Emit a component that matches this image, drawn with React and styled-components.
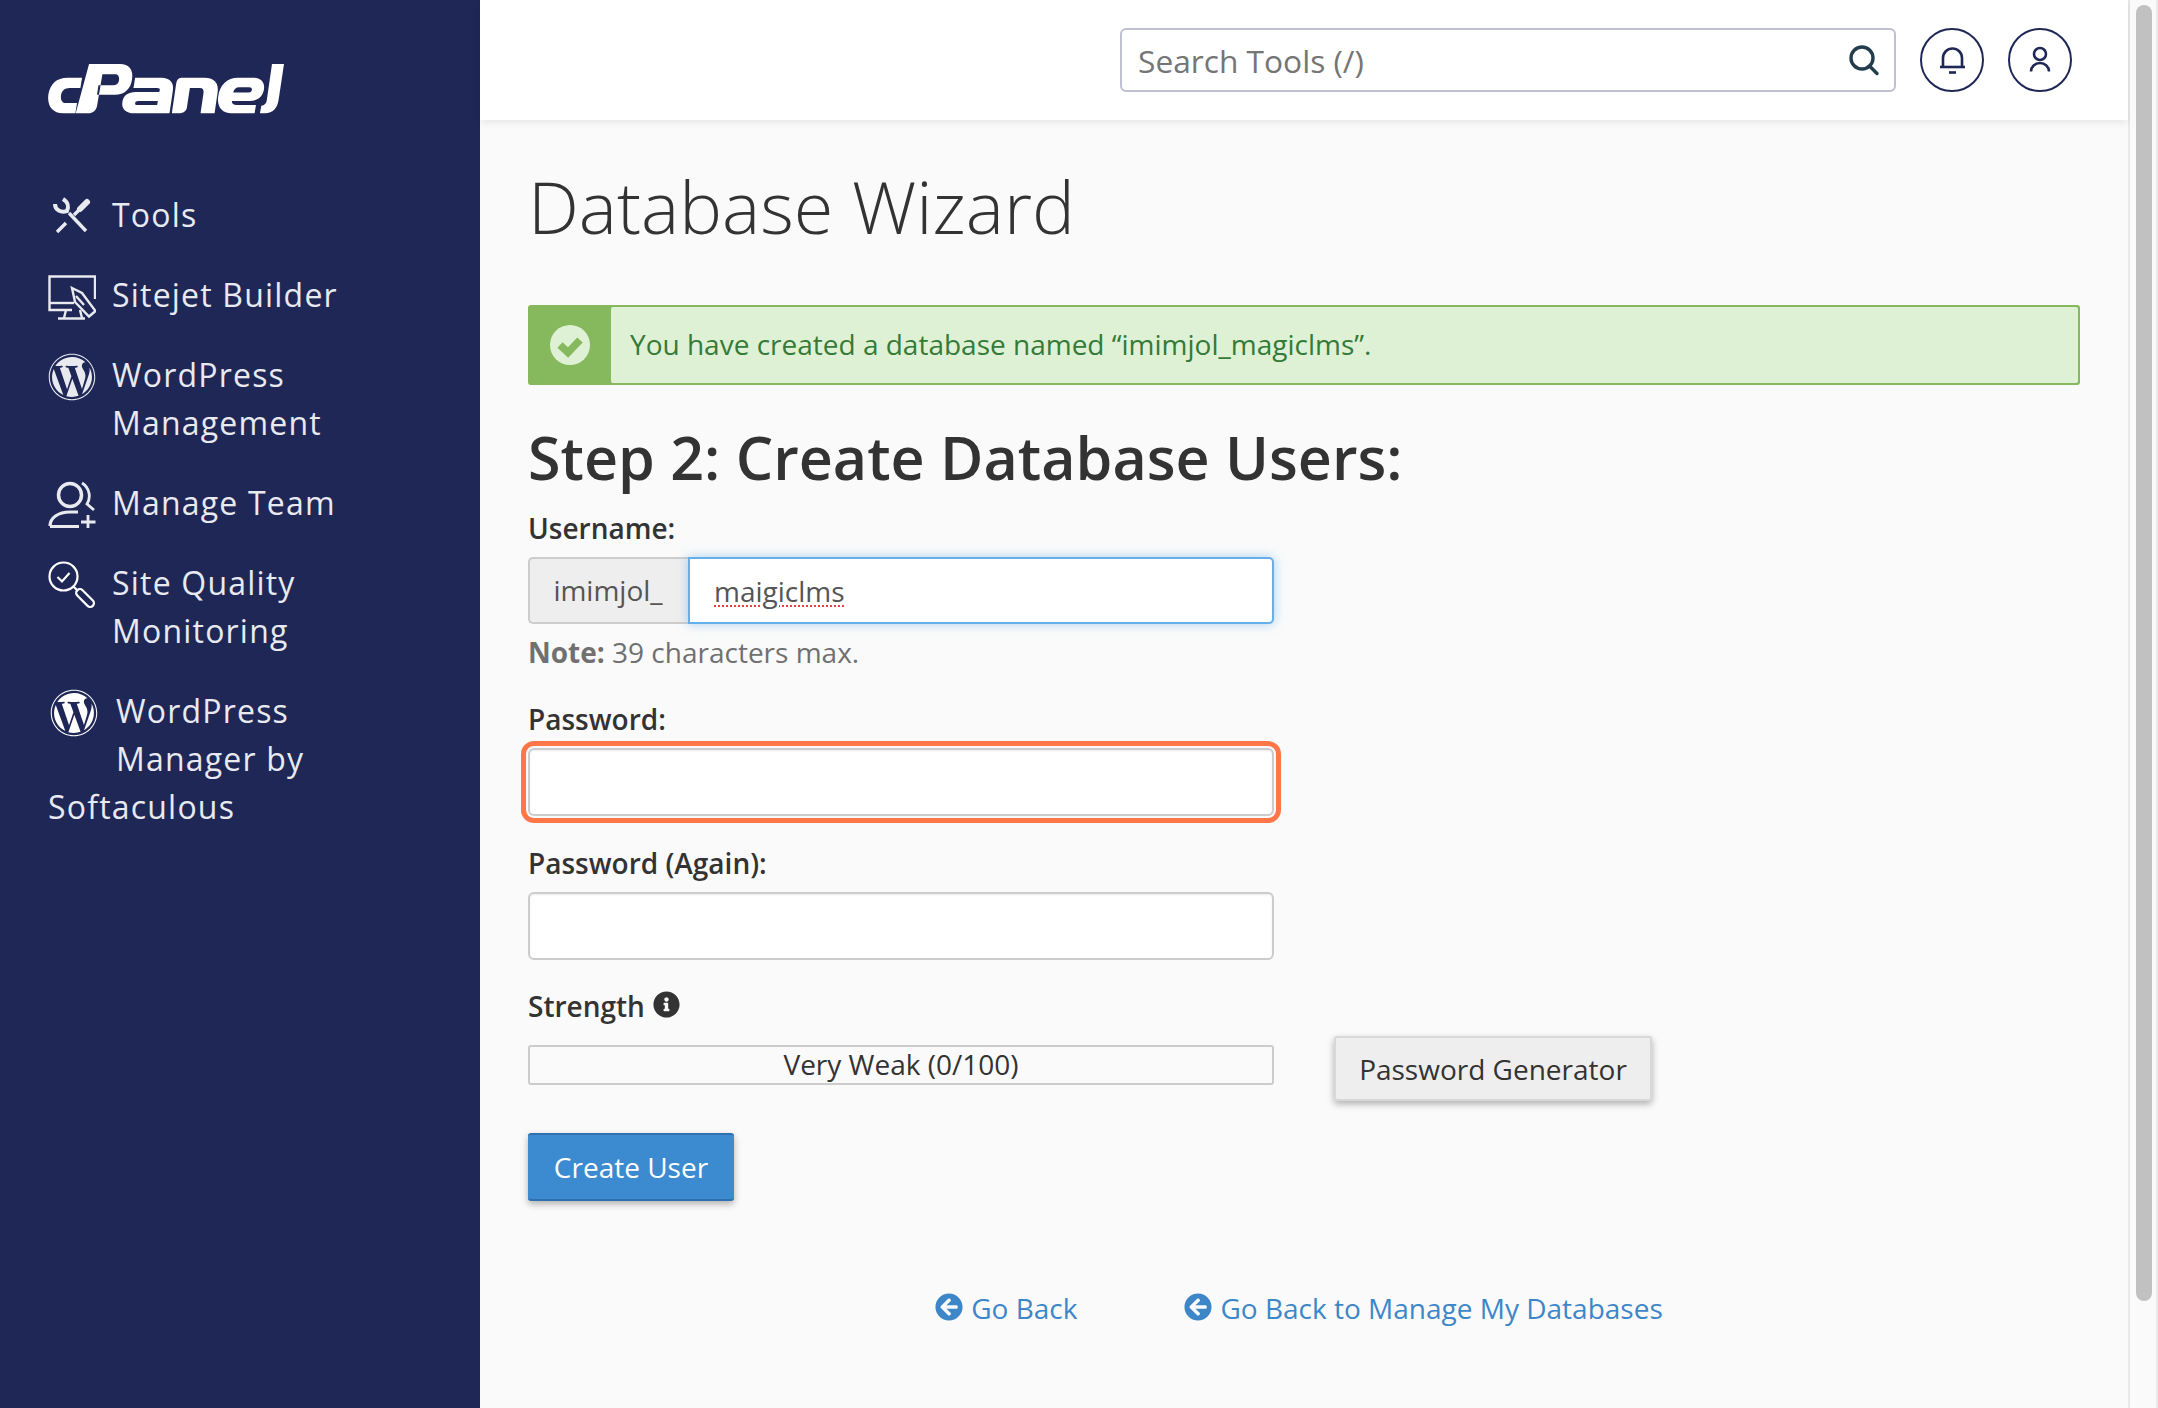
import React from 'react'
import styled, { createGlobalStyle } from 'styled-components'
import { FaWordpress, FaInfoCircle, FaArrowCircleLeft } from 'react-icons/fa'

const GlobalStyle = createGlobalStyle`
  html, body {
    margin: 0;
    padding: 0;
    height: 100%;
    overflow: hidden;
    background: #fafafa;
    font-family: "Open Sans", "Liberation Sans", sans-serif;
  }
  * { box-sizing: border-box; }
`

const Page = styled.div`
  display: grid;
  grid-template-columns: 480px 1fr 28px;
  height: 100vh;
  overflow: hidden;
`

const Sidebar = styled.aside`
  background: #1f2756;
  padding: 64px 0 0 48px;
  color: #e8eaf0;
`

const Logo = styled.svg`
  display: block;
  width: 237px;
  height: 50px;
`

const Nav = styled.nav`
  display: flex;
  flex-direction: column;
  gap: 32px;
  margin-top: 77px;
  padding-right: 48px;
`

const NavItem = styled.a`
  display: flex;
  gap: 16px;
  font-size: 32px;
  line-height: 48px;
  letter-spacing: 1.2px;
  color: #e8eaf0;
`

const NavFloat = styled.a`
  display: block;
  font-size: 32px;
  line-height: 48px;
  letter-spacing: 1.2px;
  color: #e8eaf0;
`

const NavIcon = styled.svg`
  flex: none;
  width: 48px;
  height: 48px;
  margin-top: ${(props) => props.$top || 0}px;
  margin-bottom: -${(props) => props.$top || 0}px;
`

const FloatIcon = styled.span`
  float: left;
  width: 68px;
  height: 96px;
  padding: 2px 0 0 2px;
  font-size: 48px;
  line-height: 0;
  color: #fff;
`

const WpIcon = styled.span`
  flex: none;
  width: 48px;
  height: 48px;
  margin-top: 2px;
  margin-bottom: -2px;
  font-size: 48px;
  line-height: 0;
`

const Main = styled.main`
  min-width: 0;
  height: 100vh;
  background: #fafafa;
  border-right: 2px solid #e9e9e9;
`

const Topbar = styled.header`
  display: flex;
  align-items: center;
  justify-content: flex-end;
  gap: 24px;
  height: 120px;
  padding: 0 56px 0 0;
  background: #fff;
  box-shadow: 0 2px 8px rgba(0, 0, 0, 0.09);
`

const Search = styled.div`
  display: flex;
  align-items: center;
  width: 776px;
  height: 64px;
  padding: 0 14px 0 16px;
  background: #fff;
  border: 2px solid #bfc1d2;
  border-radius: 6px;
`

const SearchInput = styled.input`
  flex: 1;
  border: none;
  outline: none;
  padding: 0;
  font-family: inherit;
  font-size: 31.7px;
  background: transparent;
  &::placeholder { color: #757575; opacity: 1; }
`

const RoundButton = styled.button`
  display: block;
  width: 64px;
  height: 64px;
  padding: 0;
  background: #fff;
  border: 2px solid #1f2756;
  border-radius: 50%;
  svg { display: block; margin: -2px; }
`

const Content = styled.div`
  padding: 0 48px 0 48px;
`

const Title = styled.h1`
  margin: 0;
  padding-top: 30px;
  font-size: 72px;
  line-height: 112px;
  font-weight: 300;
  color: #333;
`

const Alert = styled.div`
  display: flex;
  align-items: stretch;
  height: 80px;
  margin-top: 43px;
  background: #86b85d;
  border: 2px solid #86b85d;
  border-radius: 3px;
`

const AlertIcon = styled.div`
  display: flex;
  align-items: center;
  justify-content: center;
  width: 81px;
  padding-right: 2px;
  flex: none;
`

const AlertText = styled.div`
  flex: 1;
  display: flex;
  align-items: center;
  padding: 0 0 2px 19px;
  background: #dff1d4;
  border-radius: 2px;
  font-size: 28px;
  color: #357a38;
`

const Step = styled.h2`
  margin: 36px 0 0;
  font-size: 59.2px;
  line-height: 72px;
  font-weight: 600;
  color: #333;
`

const Label = styled.label`
  display: block;
  font-size: 28px;
  line-height: 38px;
  font-weight: 600;
  color: #333;
  margin-top: ${(props) => props.$top || 0}px;
`

const InputRow = styled.div`
  display: flex;
  width: 746px;
  height: 67px;
  margin-top: 10px;
`

const Addon = styled.span`
  display: flex;
  align-items: center;
  justify-content: center;
  width: 160px;
  padding: 0 2px 2px 0;
  background: #eee;
  border: 2px solid #ccc;
  border-right: none;
  border-radius: 5px 0 0 5px;
  font-size: 28px;
  color: #555;
`

const UserInput = styled.input`
  flex: 1;
  min-width: 0;
  padding: 0 24px;
  background: #fff;
  border: 2px solid #66afe9;
  border-radius: 0 5px 5px 0;
  outline: none;
  box-shadow: 0 0 11px rgba(102, 175, 233, 0.55);
  font-family: inherit;
  font-size: 28px;
  color: #555;
  text-decoration: underline dotted #e8403f 2px;
  text-underline-offset: 4px;
`

const Note = styled.p`
  margin: 9px 0 0;
  font-size: 28px;
  line-height: 38px;
  color: #707070;
  b { font-weight: 700; }
`

const TextInput = styled.input`
  display: block;
  width: 746px;
  height: 68px;
  margin-top: 10px;
  background: #fff;
  border: 2px solid #ccc;
  border-radius: 6px;
  box-shadow: inset 0 1px 2px rgba(0, 0, 0, 0.08);
  outline: ${(props) => (props.$alert ? '5px solid #ff7648' : 'none')};
  outline-offset: 2.5px;
`

const StrengthRow = styled.div`
  display: flex;
  align-items: flex-start;
  margin-top: 27px;
`

const StrengthCol = styled.div`
  width: 746px;
  flex: none;
`

const StrengthLabel = styled.div`
  display: flex;
  align-items: center;
  gap: 8px;
  height: 38px;
  font-size: 28px;
  font-weight: 600;
  color: #333;
  svg { font-size: 27px; margin-top: -3px; }
`

const Bar = styled.div`
  height: 40px;
  margin-top: 20px;
  background: #fafafa;
  border: 2px solid #ccc;
  border-radius: 3px;
  text-align: center;
  font-size: 28px;
  line-height: 34px;
  color: #333;
`

const GeneratorButton = styled.button`
  flex: none;
  width: 318px;
  height: 65px;
  margin: 49px 0 0 60px;
  background: #eee;
  border: 2px solid #d8d8d8;
  border-radius: 3px;
  box-shadow: 0 3px 7px rgba(0, 0, 0, 0.3);
  font-family: inherit;
  font-size: 28px;
  color: #333;
`

const CreateButton = styled.button`
  display: block;
  width: 206px;
  height: 68px;
  margin-top: 32px;
  background: #3c8ad0;
  border: none;
  border-top: 2px solid #2f71b0;
  border-bottom: 2px solid #2f71b0;
  border-radius: 3px;
  box-shadow: 0 3px 7px rgba(0, 0, 0, 0.3);
  font-family: inherit;
  font-size: 28px;
  color: #fff;
`

const Links = styled.div`
  display: flex;
  justify-content: center;
  gap: 107px;
  margin-top: 88px;
  padding-right: 10px;
`

const BackLink = styled.a`
  display: flex;
  align-items: center;
  gap: 8px;
  font-size: 28px;
  line-height: 38px;
  color: #3d87c9;
  svg { font-size: 28px; margin-top: -3px; }
`

const Scrollbar = styled.div`
  height: 100vh;
  padding: 5px 4px 0 6px;
  background: #fafafa;
  border-right: 2px solid #e9e9e9;
`

const Thumb = styled.div`
  height: 1296px;
  background: #c1c1c1;
  border-radius: 8px;
`

const iconStroke = { fill: 'none', stroke: '#e8eaf0', strokeWidth: 2.4 }

function CpanelLogo() {
  return (
    <Logo viewBox="25 28 710 146" preserveAspectRatio="none" fill="#fff">
      <path d="M127 68H84C50 68 31 87 26 118C22 151 38 172 70 172H107L112 142H78C68 142 62 133 64 120C66 106 75 98 90 98H122Z" />
      <path fillRule="evenodd" d="M148 28H240C268 28 281 45 277 72C273 101 255 118 225 118H172L176 90H222C232 90 237 83 238 74C239 64 234 58 226 58H188L172 150C170 163 160 172 145 172H108Z" />
      <path fillRule="evenodd" d="M286 68H365C390 68 403 82 399 106L389 172H284C258 172 244 158 248 138C251 120 265 110 288 110H358L360 104C361 100 358 98 352 98H281ZM295 136C289 136 286 139 286 143C286 146 288 148 293 148H352L354 136Z" />
      <path d="M424 68H494C523 68 538 84 533 112L524 172H482L491 112C492 103 489 98 480 98H450L441 156C439 166 430 172 418 172H396L409 85C411 74 416 68 424 68Z" />
      <path fillRule="evenodd" d="M594 68H640C664 68 675 82 672 102C668 126 652 136 628 136H576C575 143 580 148 590 148H648L644 172H574C546 172 530 152 535 122C540 88 562 68 594 68ZM598 96C588 96 582 102 580 111H626C632 111 635 108 636 103C636 99 634 96 628 96Z" />
      <path d="M696 28H732L716 132C712 158 698 172 676 172H660L664 150C676 148 680 140 681 130Z" />
    </Logo>
  )
}

function ToolsIcon() {
  return (
    <NavIcon viewBox="0 0 48 48" $top={1} fill="none" stroke="#e8eaf0">
      <path d="M7 12C7 18 13 21 19 19C21 15 20 10 15 7" strokeWidth="4" />
      <path d="M21 21L38 39" strokeWidth="3.4" />
      <path d="M39 10L32 17" strokeWidth="6" strokeLinecap="round" />
      <path d="M31 18L26 23M18 31L9 40" strokeWidth="3.4" />
    </NavIcon>
  )
}

function SitejetIcon() {
  return (
    <NavIcon viewBox="0 0 48 48" $top={4} {...iconStroke}>
      <path d="M47 24V1.5H1.5V35H24" />
      <path d="M1.5 28H26" />
      <path d="M18 35L16 43M32 35L34 43M10 43.500H37" />
      <path d="M24 13L34 18L47.500 36L41 41.500L27 27Z" />
      <path d="M28 21L36 30" />
    </NavIcon>
  )
}

function TeamIcon() {
  return (
    <NavIcon viewBox="0 0 48 48" $top={1} fill="none" stroke="#e8eaf0">
      <circle cx="22" cy="15" r="11.500" strokeWidth="3.500" />
      <path d="M34 3C42 8 43 18 39 24L46 30" strokeWidth="2.8" />
      <path d="M2 46C2 38 10 32 22 32H30M2 46.500H31" strokeWidth="3.2" />
      <path d="M40 35V48.500M33 42H47.500" strokeWidth="2.8" />
    </NavIcon>
  )
}

function QualityIcon() {
  return (
    <NavIcon viewBox="0 0 48 48" $top={2} fill="none" stroke="#fff" strokeWidth="2.2">
      <circle cx="15.500" cy="15.500" r="14" />
      <path d="M9.500 16L14 20.500L21.500 12" />
      <path d="M25.500 25.500L30 30" />
      <rect x="29" y="26.250" width="22" height="7.500" rx="3.700" transform="rotate(45 30 30)" />
    </NavIcon>
  )
}

export default function App() {
  return (
    <Page>
      <GlobalStyle />
      <Sidebar>
        <CpanelLogo />
        <Nav>
          <NavItem><ToolsIcon /><span>Tools</span></NavItem>
          <NavItem><SitejetIcon /><span>Sitejet Builder</span></NavItem>
          <NavItem><WpIcon><FaWordpress /></WpIcon><span>WordPress Management</span></NavItem>
          <NavItem><TeamIcon /><span>Manage Team</span></NavItem>
          <NavItem><QualityIcon /><span>Site Quality Monitoring</span></NavItem>
          <NavFloat><FloatIcon><FaWordpress /></FloatIcon>WordPress Manager by Softaculous</NavFloat>
        </Nav>
      </Sidebar>
      <Main>
        <Topbar>
          <Search>
            <SearchInput placeholder="Search Tools (/)" />
            <svg width="32" height="32" viewBox="0 0 32 32" fill="none" stroke="#233d4d" strokeWidth="3.4">
              <circle cx="14" cy="14" r="11" />
              <path d="M21.500 22L29 29.500" strokeLinecap="round" />
            </svg>
          </Search>
          <RoundButton aria-label="Notifications">
            <svg width="64" height="64" viewBox="0 0 64 64" fill="none" stroke="#1f2756" strokeWidth="2.6">
              <path d="M23 39V30a9.500 9.500 0 0 1 19 0V39" />
              <path d="M20 39H45" />
              <path d="M29 44.500H36" />
            </svg>
          </RoundButton>
          <RoundButton aria-label="Account">
            <svg width="64" height="64" viewBox="0 0 64 64" fill="none" stroke="#1f2756" strokeWidth="2.6">
              <circle cx="32" cy="26" r="6" />
              <path d="M23 43.500a9 8.500 0 0 1 18 0" />
            </svg>
          </RoundButton>
        </Topbar>
        <Content>
          <Title>Database Wizard</Title>
          <Alert>
            <AlertIcon>
              <svg width="40" height="40" viewBox="0 0 40 40">
                <circle cx="20" cy="20" r="20" fill="#dff1d4" />
                <path d="M10 20L18 27.500L30 15" fill="none" stroke="#86b85d" strokeWidth="7.500" />
              </svg>
            </AlertIcon>
            <AlertText>You have created a database named “imimjol_magiclms”.</AlertText>
          </Alert>
          <Step>Step 2: Create Database Users:</Step>
          <Label $top={16}>Username:</Label>
          <InputRow>
            <Addon>imimjol_</Addon>
            <UserInput defaultValue="maigiclms" spellCheck={false} />
          </InputRow>
          <Note><b>Note:</b> 39 characters max.</Note>
          <Label $top={29}>Password:</Label>
          <TextInput type="password" $alert />
          <Label $top={28}>Password (Again):</Label>
          <TextInput type="password" />
          <StrengthRow>
            <StrengthCol>
              <StrengthLabel>Strength <FaInfoCircle /></StrengthLabel>
              <Bar>Very Weak (0/100)</Bar>
            </StrengthCol>
            <GeneratorButton>Password Generator</GeneratorButton>
          </StrengthRow>
          <CreateButton>Create User</CreateButton>
          <Links>
            <BackLink><FaArrowCircleLeft /> Go Back</BackLink>
            <BackLink><FaArrowCircleLeft /> Go Back to Manage My Databases</BackLink>
          </Links>
        </Content>
      </Main>
      <Scrollbar><Thumb /></Scrollbar>
    </Page>
  )
}
